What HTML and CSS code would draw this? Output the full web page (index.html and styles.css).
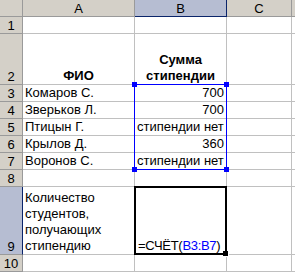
FILE: index.html
```html
<!DOCTYPE html>
<html lang="ru">
<head>
<meta charset="utf-8">
<title>Стипендии</title>
<link rel="stylesheet" href="styles.css">
</head>
<body>
<div class="sheet">
  <!-- column headers -->
  <div class="hd corner"></div>
  <div class="hd col">A</div>
  <div class="hd col sel-col">B</div>
  <div class="hd col">C</div>
  <div class="hd col"></div>

  <!-- row 1 -->
  <div class="hd row">1</div>
  <div class="c"></div><div class="c"></div><div class="c"></div><div class="c"></div>

  <!-- row 2 -->
  <div class="hd row">2</div>
  <div class="c b ctr">ФИО</div>
  <div class="c b ctr wrap">Сумма стипендии</div>
  <div class="c"></div><div class="c"></div>

  <!-- rows 3–7 -->
  <div class="hd row">3</div>
  <div class="c">Комаров С.</div><div class="c r">700</div><div class="c"></div><div class="c"></div>
  <div class="hd row">4</div>
  <div class="c">Зверьков Л.</div><div class="c r">700</div><div class="c"></div><div class="c"></div>
  <div class="hd row">5</div>
  <div class="c">Птицын Г.</div><div class="c">стипендии нет</div><div class="c"></div><div class="c"></div>
  <div class="hd row">6</div>
  <div class="c">Крылов Д.</div><div class="c r">360</div><div class="c"></div><div class="c"></div>
  <div class="hd row">7</div>
  <div class="c">Воронов С.</div><div class="c">стипендии нет</div><div class="c"></div><div class="c"></div>

  <!-- row 8 -->
  <div class="hd row">8</div>
  <div class="c"></div><div class="c"></div><div class="c"></div><div class="c"></div>

  <!-- row 9 -->
  <div class="hd row sel-row">9</div>
  <div class="c wrap">Количество студентов, получающих стипендию</div>
  <div class="c fx">=СЧЁТ(<span class="ref">B3:B7</span>)</div>
  <div class="c"></div><div class="c"></div>

  <!-- row 10 -->
  <div class="hd row">10</div>
  <div class="c"></div><div class="c"></div><div class="c"></div><div class="c"></div>

  <!-- referenced range B3:B7 -->
  <div class="range">
    <span class="handle tl"></span><span class="handle tr"></span>
    <span class="handle bl"></span><span class="handle br"></span>
  </div>

  <!-- active cell B9 -->
  <div class="active"><span class="fill"></span></div>
</div>
</body>
</html>
```

FILE: styles.css
```css
html, body {
  margin: 0;
  padding: 0;
  background: #ffffff;
  overflow: hidden;
}

.sheet {
  position: relative;
  display: grid;
  grid-template-columns: 23px 112px 92px 65px 3px;
  grid-template-rows: 17px 17px 51px repeat(6, 17px) 68px 17px;
  font-family: "Liberation Sans", Arial, sans-serif;
  font-size: 13px;
  color: #000000;
}

.hd {
  box-sizing: border-box;
  background: #d4d0c8;
  border-right: 1px solid #9a9a9a;
  border-bottom: 1px solid #9a9a9a;
  display: flex;
  justify-content: center;
  line-height: 15px;
}

.hd.col {
  align-items: center;
}

.hd.row {
  align-items: flex-end;
}

.hd.sel-col {
  background: #b6bdd2;
  border-bottom-color: #0a246a;
  border-right-color: #0a246a;
}

.hd.sel-row {
  background: #b6bdd2;
  border-right-color: #0a246a;
}

.c {
  box-sizing: border-box;
  border-right: 1px solid #c0c0c0;
  border-bottom: 1px solid #c0c0c0;
  padding: 0 2px;
  display: flex;
  align-items: flex-end;
  line-height: 16px;
  white-space: nowrap;
  overflow: hidden;
}

/* the narrow sliver of column D at the window edge */
.sheet > :nth-child(5n) {
  padding: 0;
  border-right: 0;
}

.c.b { font-weight: bold; }
.c.ctr { justify-content: center; text-align: center; }
.c.r { justify-content: flex-end; }

.c.wrap {
  white-space: normal;
}

/* formula being edited: a touch tighter so the closing bracket stays clear of the frame */
.c.fx {
  padding-left: 3px;
  letter-spacing: -0.3px;
}

.ref { color: #0000ff; }

/* overlays sit on top of the grid cells without taking part in placement */
.range {
  position: absolute;
  grid-column: 3 / 4;
  grid-row: 4 / 9;
  top: -1px;
  left: -1px;
  right: 0;
  bottom: 0;
  border: 1px solid #0000ff;
}

.handle {
  position: absolute;
  width: 5px;
  height: 5px;
  background: #0000ff;
}
.handle.tl { left: -3px; top: -3px; }
.handle.tr { right: -3px; top: -3px; }
.handle.bl { left: -3px; bottom: -3px; }
.handle.br { right: -3px; bottom: -3px; }

.active {
  position: absolute;
  grid-column: 3 / 4;
  grid-row: 10 / 11;
  top: -1px;
  left: -1px;
  right: 0;
  bottom: 0;
  border: 2px solid #000000;
}

.fill {
  position: absolute;
  right: -4px;
  bottom: -4px;
  width: 5px;
  height: 5px;
  background: #000000;
  border-right: 1px solid #ffffff;
  border-bottom: 1px solid #ffffff;
}
```
